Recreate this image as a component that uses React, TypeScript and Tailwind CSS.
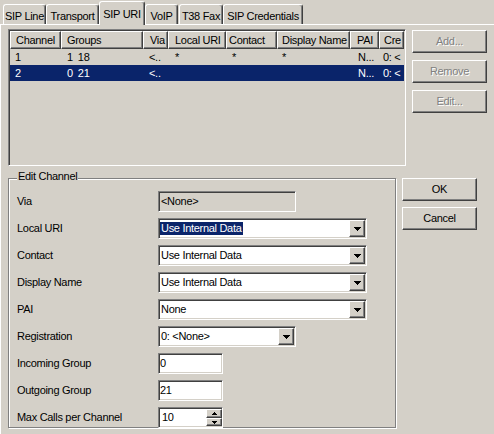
import React from "react";

const raised =
  "border border-t-white border-l-white border-b-[#404040] border-r-[#404040] shadow-[inset_-1px_-1px_#808080,inset_1px_1px_#d4d0c8]";
const sunken =
  "border border-t-[#808080] border-l-[#808080] border-b-white border-r-white shadow-[inset_1px_1px_#404040,inset_-1px_-1px_#d4d0c8]";

function DownTri() {
  return (
    <svg width="7" height="4" viewBox="0 0 7 4" shapeRendering="crispEdges">
      <rect x="0" y="0" width="7" height="1" fill="#000" />
      <rect x="1" y="1" width="5" height="1" fill="#000" />
      <rect x="2" y="2" width="3" height="1" fill="#000" />
      <rect x="3" y="3" width="1" height="1" fill="#000" />
    </svg>
  );
}

function SmallTri({ up }: { up?: boolean }) {
  return (
    <svg width="5" height="3" viewBox="0 0 5 3" shapeRendering="crispEdges">
      {up ? (
        <>
          <rect x="2" y="0" width="1" height="1" fill="#000" />
          <rect x="1" y="1" width="3" height="1" fill="#000" />
          <rect x="0" y="2" width="5" height="1" fill="#000" />
        </>
      ) : (
        <>
          <rect x="0" y="0" width="5" height="1" fill="#000" />
          <rect x="1" y="1" width="3" height="1" fill="#000" />
          <rect x="2" y="2" width="1" height="1" fill="#000" />
        </>
      )}
    </svg>
  );
}

function Combo({ value, wide, hl }: { value: string; wide?: boolean; hl?: boolean }) {
  return (
    <div
      className={`${sunken} ${wide ? "w-[209px]" : "w-[138px]"} h-[21px] bg-white flex items-center`}
    >
      <div className={`flex-1 flex items-center whitespace-nowrap overflow-hidden ${hl ? "pl-[1px]" : "pl-[2px]"}`}>
        {hl ? <span className="bg-[#0a246a] text-white px-[1px] leading-[13px]">{value}</span> : value}
      </div>
      <div className={`${raised} w-[16px] h-[17px] mr-[1px] bg-[#d4d0c8] flex items-center justify-center`}>
        <DownTri />
      </div>
    </div>
  );
}

function TextBox({ value }: { value: string }) {
  return (
    <div className={`${sunken} w-[65px] h-[21px] bg-white flex items-center pl-[1px]`}>{value}</div>
  );
}

function Row({ label, children }: { label: string; children: React.ReactNode }) {
  return (
    <div className="flex items-center h-[21px]">
      <div className="w-[141px] whitespace-nowrap">{label}</div>
      {children}
    </div>
  );
}

function Btn({ label, disabled }: { label: string; disabled?: boolean }) {
  return (
    <div
      className={`${raised} w-[75px] h-[23px] bg-[#d4d0c8] flex items-center justify-center ${
        disabled ? "text-[#808080] [text-shadow:1px_1px_0_#fff]" : "text-black"
      }`}
    >
      {label}
    </div>
  );
}

const headerCell =
  "h-full flex items-center whitespace-nowrap overflow-hidden border border-t-white border-l-white border-b-[#404040] border-r-[#404040] shadow-[inset_-1px_-1px_#808080]";

export default function App() {
  const rows: React.ReactNode[][] = [
    [
      "1",
      <>
        1<span className="ml-[5px]">18</span>
      </>,
      "<..",
      "*",
      "*",
      "*",
      "N...",
      "0: <",
    ],
    [
      "2",
      <>
        0<span className="ml-[5px]">21</span>
      </>,
      "<..",
      "",
      "",
      "",
      "N...",
      "0: <",
    ],
  ];
  const widths = ["w-[51px]", "w-[82px]", "w-[25px]", "w-[58px]", "w-[51px]", "w-[73px]", "w-[29px]", "w-[25px]"];
  const headPad = ["pl-[5px]", "pl-[5px]", "pl-[6px]", "pl-[6px]", "pl-[2px]", "pl-[4px]", "pl-[6px]", "pl-[4px]"];
  const cellPad = ["pl-[5px]", "pl-[6px]", "pl-[6px]", "pl-[7px]", "pl-[6px]", "pl-[5px]", "pl-[8px]", "pl-[4px]"];
  const headers = ["Channel", "Groups", "Via", "Local URI", "Contact", "Display Name", "PAI", "Cre"];

  return (
    <div className="w-[494px] h-[434px] overflow-hidden bg-[#d4d0c8] flex flex-col font-['Liberation_Sans',Arial,sans-serif] text-[11px] leading-[13px] tracking-[-0.3px] text-black">
      {/* Tabs */}
      <div className="h-[24px] flex items-end relative z-10 shrink-0">
        <div className="ml-[3px] w-[43px] h-[20px] pt-[5px] flex justify-center border-l border-t border-white border-r border-r-[#404040] shadow-[inset_-1px_0_#808080] rounded-t-[3px]">
          SIP Line
        </div>
        <div className="w-[53px] h-[20px] pt-[5px] flex justify-center border-l border-t border-white border-r border-r-[#404040] shadow-[inset_-1px_0_#808080] rounded-t-[3px]">
          Transport
        </div>
        <div className="w-[46px] h-[24px] relative top-[1px] pt-[6px] flex justify-center bg-[#d4d0c8] border-l border-t border-white border-r border-r-[#404040] shadow-[inset_-1px_0_#808080] rounded-t-[3px]">
          SIP URI
        </div>
        <div className="w-[33px] h-[20px] pt-[5px] flex justify-center border-l border-t border-white border-r border-r-[#404040] shadow-[inset_-1px_0_#808080] rounded-t-[3px]">
          VoIP
        </div>
        <div className="ml-[1px] w-[44px] h-[20px] pt-[5px] flex justify-center border-l border-t border-white border-r border-r-[#404040] shadow-[inset_-1px_0_#808080] rounded-t-[3px]">
          T38 Fax
        </div>
        <div className="w-[80px] h-[20px] pt-[5px] flex justify-center border-l border-t border-white border-r border-r-[#404040] shadow-[inset_-1px_0_#808080] rounded-t-[3px]">
          SIP Credentials
        </div>
      </div>

      {/* Panel */}
      <div className="flex-1 border-t border-l border-white flex flex-col">
        <div className="flex items-start">
          {/* List view */}
          <div className={`${sunken} ml-[7px] mt-[4px] w-[398px] h-[137px] bg-[#d4d0c8] p-[1px] overflow-hidden`}>
            <div className="flex h-[18px] bg-[#d4d0c8]">
              {headers.map((h, i) => (
                <div key={i} className={`${headerCell} ${widths[i]} ${headPad[i]} shrink-0`}>
                  {h}
                </div>
              ))}
            </div>
            {rows.map((r, ri) => (
              <div key={ri} className={`flex h-[16px] items-center ${ri === 1 ? "bg-[#0a246a] text-white" : ""}`}>
                {r.map((c, ci) => (
                  <div key={ci} className={`${widths[ci]} ${cellPad[ci]} shrink-0 whitespace-pre overflow-hidden`}>
                    {c}
                  </div>
                ))}
              </div>
            ))}
          </div>
          {/* Side buttons */}
          <div className="ml-[6px] mt-[5px] flex flex-col gap-[7px]">
            <Btn label="Add..." disabled />
            <Btn label="Remove" disabled />
            <Btn label="Edit..." disabled />
          </div>
        </div>

        <div className="flex items-start mt-[12px]">
          {/* Group box */}
          <div className="relative ml-[7px] w-[388px] h-[250px] border border-[#808080] shadow-[inset_1px_1px_#fff,1px_1px_#fff]">
            <span className="absolute left-[8px] top-[-9px] bg-[#d4d0c8] px-[1px]">Edit Channel</span>
            <div className="pt-[12px] pl-[8px] flex flex-col gap-[6px]">
              <Row label="Via">
                <div className={`${sunken} w-[138px] h-[21px] bg-[#d4d0c8] flex items-center pl-[2px]`}>&lt;None&gt;</div>
              </Row>
              <Row label="Local URI">
                <Combo value="Use Internal Data" wide hl />
              </Row>
              <Row label="Contact">
                <Combo value="Use Internal Data" wide />
              </Row>
              <Row label="Display Name">
                <Combo value="Use Internal Data" wide />
              </Row>
              <Row label="PAI">
                <Combo value="None" wide />
              </Row>
              <Row label="Registration">
                <Combo value="0: <None>" />
              </Row>
              <Row label="Incoming Group">
                <TextBox value="0" />
              </Row>
              <Row label="Outgoing Group">
                <TextBox value="21" />
              </Row>
              <Row label="Max Calls per Channel">
                <div className={`${sunken} w-[65px] h-[21px] bg-white flex items-center`}>
                  <div className="flex-1 pl-[3px]">10</div>
                  <div className="flex flex-col w-[16px] h-[17px]">
                    <div className={`${raised} h-[9px] bg-[#d4d0c8] flex items-center justify-center`}>
                      <SmallTri up />
                    </div>
                    <div className={`${raised} h-[8px] bg-[#d4d0c8] flex items-center justify-center`}>
                      <SmallTri />
                    </div>
                  </div>
                </div>
              </Row>
            </div>
          </div>
          {/* OK / Cancel */}
          <div className="ml-[6px] flex flex-col gap-[6px]">
            <Btn label="OK" />
            <Btn label="Cancel" />
          </div>
        </div>
      </div>
    </div>
  );
}
